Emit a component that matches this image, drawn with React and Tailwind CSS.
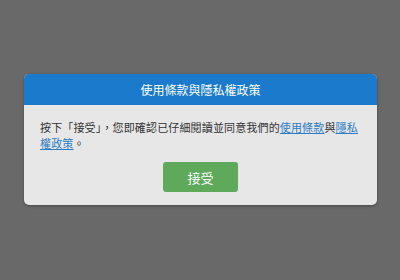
export default function App() {
  return (
    <div
      className="w-[400px] h-[280px] bg-[#696969] pt-[74px] pl-[24px]"
      style={{ fontFamily: '"Noto Sans CJK TC", "Noto Sans", sans-serif' }}
    >
      <div className="w-[353px] rounded-[5px] overflow-hidden bg-[#e7e7e7] shadow-[0_1px_3px_rgba(0,0,0,0.35)]">
        {/* Header */}
        <div className="h-[31px] bg-[#1b7acb] flex items-center justify-center">
          <span className="text-[12px] text-white leading-none">使用條款與隱私權政策</span>
        </div>

        {/* Body */}
        <div className="px-[16px] pt-[14px] pb-[13px]">
          <p className="text-[11px] leading-[16px] tracking-[0.15px] text-[#333333]">
            按下「接受」，您即確認已仔細閱讀並同意我們的
            <a href="#" className="text-[#2b7cc4] underline">使用條款</a>
            與
            <a href="#" className="text-[#2b7cc4] underline">隱私權政策</a>
            。
          </p>
          <div className="flex justify-center mt-[11px]">
            <button className="w-[75px] h-[30px] rounded-[3px] bg-[#5ea95a] text-white text-[13px] leading-none">
              接受
            </button>
          </div>
        </div>
      </div>
    </div>
  )
}
